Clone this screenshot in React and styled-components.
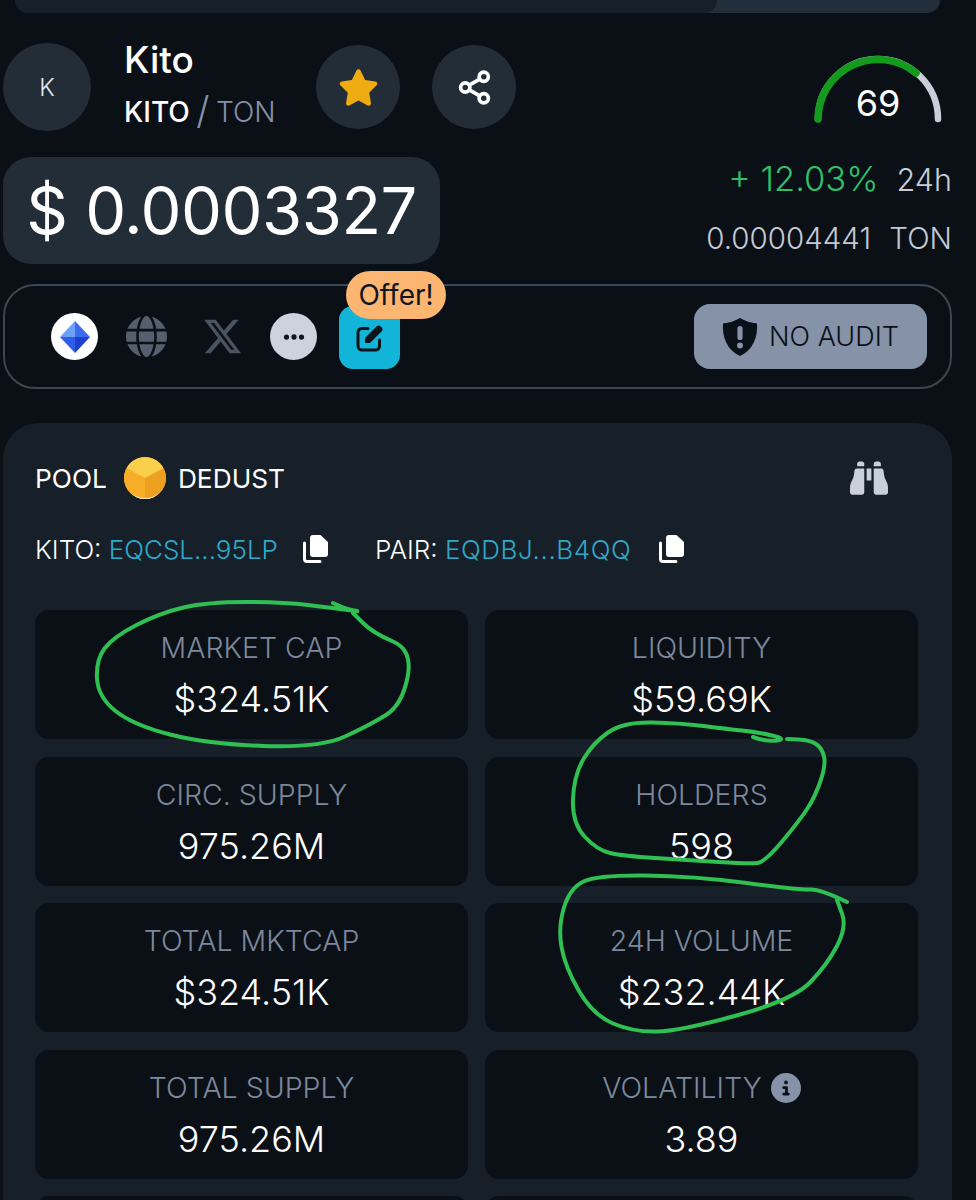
import React from "react";
import styled, { createGlobalStyle } from "styled-components";
import { FaStar, FaGlobe, FaEllipsis, FaXTwitter, FaBinoculars, FaCircleInfo } from "react-icons/fa6";
import { Share2 } from "lucide-react";

const stats = [
	{ label: "MARKET CAP", value: "$324.51K" },
	{ label: "LIQUIDITY", value: "$59.69K" },
	{ label: "CIRC. SUPPLY", value: "975.26M" },
	{ label: "HOLDERS", value: "598" },
	{ label: "TOTAL MKTCAP", value: "$324.51K" },
	{ label: "24H VOLUME", value: "$232.44K" },
	{ label: "TOTAL SUPPLY", value: "975.26M" },
	{ label: "VOLATILITY", value: "3.89", info: true },
	{ label: "", value: "" },
	{ label: "", value: "" },
];

// hand drawn circles, points traced from the picture
const scribbles = [
	[[333, 603], [345, 609], [363, 612], [333, 608], [283, 602], [207, 602], [160, 613], [113, 637], [96, 660], [98, 697], [133, 725], [207, 744], [320, 748], [370, 725], [402, 705], [413, 650], [373, 633], [353, 613]],
	[[753, 737], [767, 742], [787, 739], [757, 732], [727, 729], [680, 723], [623, 722], [593, 743], [574, 775], [572, 823], [597, 850], [623, 856], [687, 860], [750, 864], [765, 862], [800, 820], [815, 797], [826, 765], [822, 748], [810, 740], [787, 739]],
	[[847, 902], [820, 889], [800, 890], [693, 876], [597, 875], [570, 888], [558, 927], [565, 967], [593, 1015], [633, 1032], [680, 1031], [793, 1000], [827, 965], [847, 927], [837, 900]],
];

const smoothPath = (pts) => {
	let d = `M${pts[0][0]} ${pts[0][1]}`;
	for (let i = 1; i < pts.length - 1; i++) {
		const mx = (pts[i][0] + pts[i + 1][0]) / 2;
		const my = (pts[i][1] + pts[i + 1][1]) / 2;
		d += ` Q${pts[i][0]} ${pts[i][1]} ${mx} ${my}`;
	}
	const last = pts[pts.length - 1];
	return `${d} L${last[0]} ${last[1]}`;
};

const TonLogo = () => (
	<svg width="30" height="32" viewBox="0 0 30 32">
		<polygon points="15,0 30,16 15,16" fill="#3b6cf0" />
		<polygon points="15,0 0,16 15,16" fill="#6fa0f7" />
		<polygon points="0,16 15,16 15,32" fill="#2f5de8" />
		<polygon points="30,16 15,16 15,32" fill="#1f3fd0" />
	</svg>
);

const DedustLogo = () => (
	<svg width="42" height="42" viewBox="0 0 42 42">
		<defs>
			<clipPath id="dedust-clip">
				<circle cx="21" cy="21" r="21" />
			</clipPath>
		</defs>
		<g clipPath="url(#dedust-clip)">
			<rect width="42" height="42" fill="#f6a821" />
			<polygon points="21,-2 44,9 21,21 -2,9" fill="#f9cf4c" />
			<polygon points="21,21 44,9 44,44 21,44" fill="#eda01f" />
			<polygon points="21,21 -2,9 -2,44 21,44" fill="#f7ad28" />
			<path d="M6 36 Q21 46 36 36 L36 42 L6 42Z" fill="#efe6d0" />
		</g>
	</svg>
);

const EditIcon = () => (
	<svg width="28" height="28" viewBox="0 0 28 28">
		<path d="M12 4.500H6a4 4 0 0 0-4 4V22a4 4 0 0 0 4 4h13.500a4 4 0 0 0 4-4v-6" fill="none" stroke="#0d131b" strokeWidth="3" strokeLinecap="round" />
		<path d="M9 19v-5L20.500 2.500a3 3 0 0 1 4.200 0l.8.8a3 3 0 0 1 0 4.200L14 19Z" fill="#0d131b" />
	</svg>
);

const ShieldIcon = () => (
	<svg width="36" height="38" viewBox="0 0 36 38">
		<path d="M18 0C23 3 29 5 35 5.500C36 19 31 32 18 38C5 32 0 19 1 5.500C7 5 13 3 18 0Z" fill="#0a1018" />
		<rect x="15.400" y="8" width="5.200" height="14" rx="2.600" fill="#8592a8" />
		<circle cx="18" cy="27.500" r="3" fill="#8592a8" />
	</svg>
);

const CopyIcon = () => (
	<svg width="25" height="28" viewBox="0 0 25 28">
		<path d="M10 0h7.500L25 7v12a3 3 0 0 1-3 3H10a3 3 0 0 1-3-3V3a3 3 0 0 1 3-3Z" fill="#fff" />
		<path d="M1.500 8v16a2.500 2.500 0 0 0 2.500 2.500h13" fill="none" stroke="#fff" strokeWidth="3" strokeLinecap="round" />
	</svg>
);

const App = () => (
	<Page>
		<GlobalStyle />
		<TopBar>
			<TopTab />
		</TopBar>
		<Hero>
			<HeroLeft>
				<NameRow>
					<Avatar>K</Avatar>
					<TokenName>
						<h1>Kito</h1>
						<p>
							KITO <Slash>/</Slash> <span>TON</span>
						</p>
					</TokenName>
					<RoundButton $first>
						<FaStar size={41} color="#efab12" />
					</RoundButton>
					<RoundButton>
						<Share2 size={37} color="#fff" strokeWidth={2.4} />
					</RoundButton>
				</NameRow>
				<PricePill>$ 0.0003327</PricePill>
			</HeroLeft>
			<HeroRight>
				<Gauge>
					<svg width="130" height="72" viewBox="0 0 130 72">
						<path d="M5 65 A60 60 0 0 1 125 65" fill="none" stroke="#c9ced8" strokeWidth="6.5" strokeLinecap="round" />
						<path d="M5 65 A60 60 0 0 1 103 19" fill="none" stroke="#149a1d" strokeWidth="7.5" strokeLinecap="round" />
					</svg>
					<GaugeValue>69</GaugeValue>
				</Gauge>
				<ChangeRow>
					<strong>+ 12.03%</strong>
					<span>24h</span>
				</ChangeRow>
				<TonPrice>
					0.00004441 <span>TON</span>
				</TonPrice>
			</HeroRight>
		</Hero>
		<LinksBar>
			<LinkIcons>
				<CircleIcon $bg="#fff">
					<TonLogo />
				</CircleIcon>
				<FaGlobe size={41} color="#555f6d" />
				<XWrap>
					<FaXTwitter size={41} color="#4a5360" />
				</XWrap>
				<CircleIcon $bg="#ccd2de">
					<FaEllipsis size={24} color="#10161e" />
				</CircleIcon>
				<EditButton>
					<EditIcon />
					<OfferBadge>Offer!</OfferBadge>
				</EditButton>
			</LinkIcons>
			<AuditBadge>
				<ShieldIcon />
				NO AUDIT
			</AuditBadge>
		</LinksBar>
		<Panel>
			<PoolRow>
				<PoolTitle>
					POOL
					<DedustLogo />
					DEDUST
				</PoolTitle>
				<FaBinoculars size={38} color="#c9d0dc" />
			</PoolRow>
			<AddressRow>
				<Address>
					KITO: <a>EQCSL...95LP</a>
				</Address>
				<CopyIcon />
				<Address $pair>
					PAIR: <a>EQDBJ...B4QQ</a>
				</Address>
				<CopyIcon />
			</AddressRow>
			<StatGrid>
				{stats.map((stat, i) => (
					<StatCard key={i}>
						<StatLabel>
							{stat.label}
							{stat.info && <FaCircleInfo size={30} color="#8592a8" />}
						</StatLabel>
						<StatValue>{stat.value}</StatValue>
					</StatCard>
				))}
			</StatGrid>
		</Panel>
		<Scribbles viewBox="0 0 976 1200">
			{scribbles.map((pts, i) => (
				<path key={i} d={smoothPath(pts)} />
			))}
		</Scribbles>
	</Page>
);

const GlobalStyle = createGlobalStyle`
	html, body {
		margin: 0;
		padding: 0;
		background: #0a1016;
	}
	* {
		box-sizing: border-box;
	}
`;

const Page = styled.div`
	position: relative;
	width: 976px;
	height: 1200px;
	overflow: hidden;
	padding: 0 24px 0 3px;
	background: #0a1016;
	color: #fff;
	font-family: "Inter", "Noto Sans", sans-serif;
	font-weight: 300;
`;

const TopBar = styled.div`
	height: 13px;
	margin: 0 12px;
	background: #222e39;
	border-radius: 0 0 24px 24px;
`;

const TopTab = styled.div`
	width: 702px;
	height: 13px;
	background: #172028;
	border-radius: 0 0 24px 24px;
`;

const Hero = styled.div`
	display: flex;
	justify-content: space-between;
	margin-top: 30px;
`;

const HeroLeft = styled.div`
	display: flex;
	flex-direction: column;
	align-items: flex-start;
	gap: 26px;
`;

const NameRow = styled.div`
	display: flex;
	align-items: center;
	height: 88px;
`;

const Avatar = styled.div`
	display: flex;
	align-items: center;
	justify-content: center;
	width: 88px;
	height: 88px;
	border-radius: 50%;
	background: #222d38;
	color: #e4e8ee;
	font-size: 24px;
`;

const TokenName = styled.div`
	width: 192px;
	margin-left: 33px;
	padding-bottom: 6px;

	h1 {
		margin: 0 0 13px;
		font-size: 37px;
		line-height: 40px;
		font-weight: 500;
	}

	p {
		margin: 0;
		font-size: 28px;
		line-height: 34px;
		font-weight: 500;
		white-space: nowrap;
	}

	span {
		color: #8592a8;
		font-weight: 300;
	}
`;

const Slash = styled.span`
	margin: 0 -1px;
	font-size: 38px;
	line-height: 34px;
	vertical-align: -2px;
`;

const RoundButton = styled.div`
	display: flex;
	align-items: center;
	justify-content: center;
	width: 84px;
	height: 84px;
	margin-left: ${(props) => (props.$first ? "0" : "32px")};
	border-radius: 50%;
	background: #222d38;
`;

const PricePill = styled.div`
	display: flex;
	align-items: center;
	justify-content: center;
	width: 437px;
	height: 107px;
	border-radius: 28px;
	background: #222d38;
	font-size: 65px;
	font-weight: 400;
	letter-spacing: -0.5px;
`;

const HeroRight = styled.div`
	display: flex;
	flex-direction: column;
	align-items: flex-end;
	padding-top: 11px;
`;

const Gauge = styled.div`
	position: relative;
	width: 130px;
	height: 72px;
	margin-right: 9px;
`;

const GaugeValue = styled.div`
	position: absolute;
	left: 0;
	right: 0;
	top: 27px;
	text-align: center;
	font-size: 36px;
	line-height: 44px;
	font-weight: 400;
`;

const ChangeRow = styled.div`
	display: flex;
	align-items: baseline;
	gap: 18px;
	margin-top: 31px;

	strong {
		font-size: 34.500px;
		line-height: 44px;
		font-weight: 300;
		color: #2fc06a;
	}

	span {
		font-size: 30.500px;
		color: #c9ced8;
	}
`;

const TonPrice = styled.div`
	margin-top: 19px;
	font-size: 29.500px;
	line-height: 36px;
	color: #c4cad4;
	white-space: nowrap;

	span {
		margin-left: 10px;
	}
`;

const LinksBar = styled.div`
	display: flex;
	align-items: center;
	justify-content: space-between;
	height: 105px;
	margin-top: 20px;
	padding: 0 23px 0 46px;
	border: 2px solid #3b4753;
	border-radius: 32px;
`;

const LinkIcons = styled.div`
	display: flex;
	align-items: center;
	gap: 28px;
`;

const XWrap = styled.div`
	display: flex;
	margin-left: 7px;
	margin-right: -1px;
`;

const CircleIcon = styled.div`
	display: flex;
	align-items: center;
	justify-content: center;
	width: 47px;
	height: 47px;
	border-radius: 50%;
	background: ${(props) => props.$bg};
`;

const EditButton = styled.div`
	position: relative;
	display: flex;
	align-items: center;
	justify-content: center;
	width: 61px;
	height: 63px;
	margin: 2px 0 0 -6px;
	border-radius: 14px;
	background: #12b5d8;
`;

const OfferBadge = styled.div`
	position: absolute;
	left: 7px;
	top: -35px;
	width: 100px;
	height: 48px;
	border-radius: 24px;
	background: #fdb572;
	color: #10161e;
	font-size: 28px;
	line-height: 48px;
	font-weight: 400;
	text-align: center;
`;

const AuditBadge = styled.div`
	display: flex;
	align-items: center;
	justify-content: center;
	gap: 11px;
	width: 233px;
	height: 65px;
	border-radius: 16px;
	background: #8592a8;
	color: #0a1018;
	font-size: 27px;
`;

const Panel = styled.div`
	margin-top: 34px;
	padding: 34px 35px 0 32px;
	background: #172028;
	border-radius: 36px 36px 0 0;
`;

const PoolRow = styled.div`
	display: flex;
	align-items: center;
	justify-content: space-between;
	height: 42px;
	padding-right: 29px;
`;

const PoolTitle = styled.div`
	display: flex;
	align-items: center;
	font-size: 26.300px;
	font-weight: 400;

	svg {
		margin: 0 12px 0 17px;
	}
`;

const AddressRow = styled.div`
	display: flex;
	align-items: center;
	height: 36px;
	margin-top: 32px;
`;

const Address = styled.div`
	width: ${(props) => (props.$pair ? "284px" : "268px")};
	margin-left: ${(props) => (props.$pair ? "47px" : "0")};
	font-size: 26px;
	font-weight: 300;
	white-space: nowrap;

	a {
		color: #2ea9cb;
		letter-spacing: ${(props) => (props.$pair ? "0.6px" : "0")};
	}
`;

const StatGrid = styled.div`
	display: grid;
	grid-template-columns: 433px 433px;
	grid-auto-rows: 129px;
	gap: 17.500px 17px;
	margin-top: 43px;
`;

const StatCard = styled.div`
	display: flex;
	flex-direction: column;
	align-items: center;
	justify-content: center;
	gap: 13px;
	border-radius: 14px;
	background: #0a1016;
`;

const StatLabel = styled.div`
	display: flex;
	align-items: center;
	gap: 9px;
	font-size: 28.500px;
	line-height: 36px;
	color: #7d889c;
`;

const StatValue = styled.div`
	font-size: 36px;
	line-height: 40px;
	color: #fff;
`;

const Scribbles = styled.svg`
	position: absolute;
	left: 0;
	top: 0;
	width: 976px;
	height: 1200px;
	pointer-events: none;

	path {
		fill: none;
		stroke: #2fbf52;
		stroke-width: 4;
		stroke-linecap: round;
		stroke-linejoin: round;
	}
`;

export default App;
